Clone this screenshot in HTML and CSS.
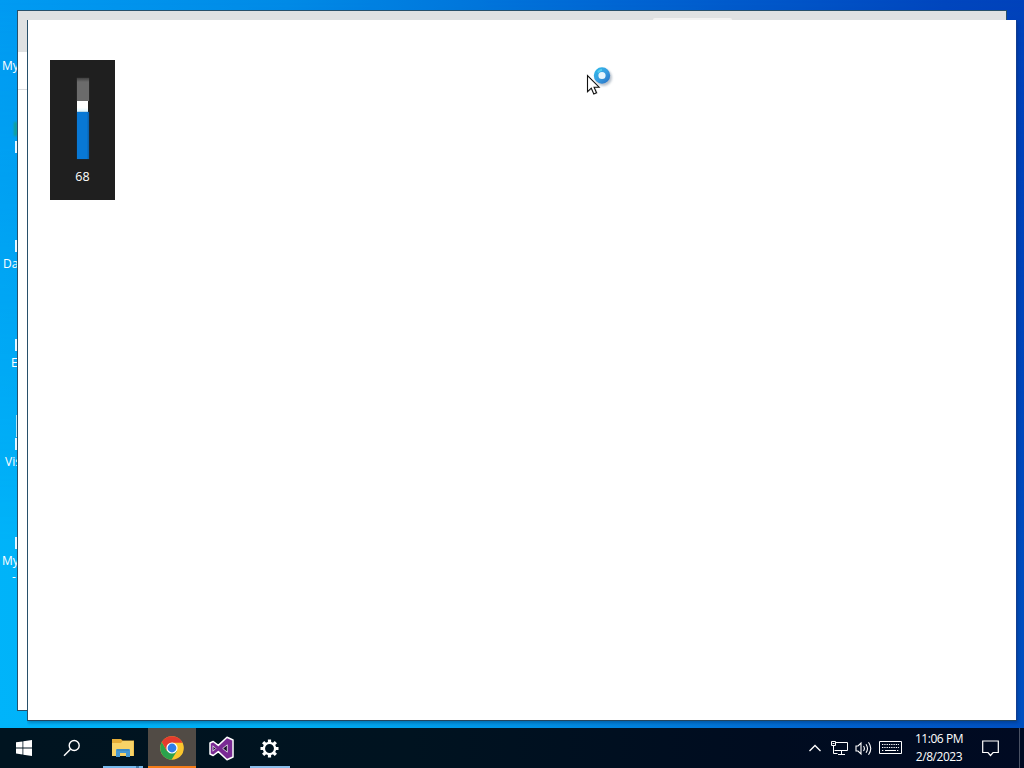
FILE: index.html
```html
<!DOCTYPE html>
<html lang="en">
<head>
<meta charset="utf-8">
<title>Desktop</title>
<link rel="stylesheet" href="styles.css">
</head>
<body>
<main class="desktop">
  <div class="shortcut s1"><span>My</span></div>
  <div class="shortcut s2"><i class="mark"></i><i class="tick"></i></div>
  <div class="shortcut s3"><i class="tick"></i><span class="in-d">Da</span></div>
  <div class="shortcut s4"><i class="tick"></i><span class="in-e">E</span></div>
  <div class="shortcut s5"><i class="page"></i><i class="tick"></i><span class="in-v">Vis</span></div>
  <div class="shortcut s6"><i class="tick"></i><span>My</span><span class="dash">-</span></div>

  <section class="window back"><div class="titlebar"><i class="tab-edge"></i></div><div class="toolbar"></div></section>
  <section class="window front"></section>

  <aside class="volume">
    <div class="track"><div class="rest"></div><div class="thumb"></div><div class="level"></div></div>
    <span class="value">68</span>
  </aside>

  <svg class="pointer" width="32" height="34" viewBox="0 0 32 34">
    <defs><linearGradient id="ring" x1="0" y1="0" x2="1" y2="1"><stop offset="0" stop-color="#2fb4e8"/><stop offset=".5" stop-color="#3a9ee0"/><stop offset="1" stop-color="#2a7acb"/></linearGradient>
    <filter id="soft" x="-30%" y="-30%" width="160%" height="160%"><feGaussianBlur stdDeviation="1.3"/></filter></defs>
    <circle cx="18.500" cy="13.500" r="6" fill="none" stroke="#8a9aaa" stroke-opacity=".6" stroke-width="5" filter="url(#soft)"/>
    <circle cx="17" cy="11.500" r="5.900" fill="#e8f5fd" stroke="url(#ring)" stroke-width="4.600"/>
    <path d="M13 8.500a5.600 5.600 0 0 1 4-2.800" fill="none" stroke="#55cdf0" stroke-width="2"/>
    <path d="M3.500 26v2l4-3 2.500 5.500 3-1-2.500-6 5-.3z" fill="#777" opacity=".25"/>
    <path d="M2.500 11.500v16.200l3.800-3.500 2.500 5.700 2.700-1.200-2.400-5.500h5z" fill="#fff" stroke="#111" stroke-width="1.100"/>
  </svg>
</main>

<footer class="taskbar">
  <div class="task start">
    <svg width="16" height="16" viewBox="0 0 16 16" fill="#fff"><path d="M0 2.300 6.500 1.400v6.100H0zM7.300 1.300 16 0v7.500H7.300zM0 8.400h6.500v6.100L0 13.600zM7.300 8.400H16V16l-8.700-1.300z"/></svg>
  </div>
  <div class="task search">
    <svg width="18" height="18" viewBox="0 0 18 18" fill="none" stroke="#fff" stroke-width="1.400"><circle cx="11.200" cy="6.500" r="5"/><path d="m7.500 10.200-6.500 6.500"/></svg>
  </div>
  <div class="task files">
    <svg width="22" height="18" viewBox="0 0 22 18"><path d="M0 0h9l1.500 1.500H22V17H0z" fill="#e5ad38"/><path d="M0 4h9l1.500-2H21.500v15H0z" fill="#f8d367"/><path d="M4 18v-7q0-1 1-1h12q1 0 1 1v7h-4v-4H8v4z" fill="#4698d2"/><path d="M5 11h12" stroke="#327fb8"/></svg>
    <i class="seam"></i>
  </div>
  <div class="task chrome">
    <svg width="24" height="24" viewBox="0 0 24 24"><circle cx="12" cy="12" r="11.800" fill="#fbc62e"/><path d="M1.800 6.100A11.800 11.800 0 0 0 11.500 23.800L17 15 7 15z" fill="#2ba24c"/><path d="M1.800 6.100A11.800 11.800 0 0 1 22.600 6.800H12L7 15z" fill="#e33b2e"/><circle cx="12" cy="12" r="5.600" fill="#fff"/><circle cx="12" cy="12" r="4.400" fill="#2f7de9"/></svg>
  </div>
  <div class="task studio">
    <svg width="25" height="25" viewBox="0 0 25 25"><path d="M18 1.500 23.700 4v17L18 23.500 9.300 15.600 4.200 19.500 1.200 18V7l3-1.500 5.100 3.900zM18.300 8.800l-4.600 3.700 4.600 3.700zM4 9.800v5.400l2.700-2.700z" fill="#7a2a94" fill-rule="evenodd"/><path d="M18 1.200 24 4v17l-6 2.800-8.700-8.200-5.100 3.900-3.200-1.500V7l3.200-1.500 5.100 3.900z" fill="none" stroke="#fff" stroke-width="1.500" stroke-linejoin="round"/><path d="M18.300 8.800l-4.600 3.700 4.600 3.700zM4 9.800v5.400l2.700-2.700z" fill="#170f28" stroke="#e9dff0" stroke-width=".9"/></svg>
  </div>
  <div class="task settings">
    <svg width="19" height="19" viewBox="-9.500 -9.500 19 19"><g stroke="#fff" stroke-width="3.200"><path d="M0-9V-5M0 9V5M-9 0h4M9 0H5"/><path d="M0-9V-5M0 9V5M-9 0h4M9 0H5" transform="rotate(45)"/></g><circle r="5.600" fill="none" stroke="#fff" stroke-width="2.300"/></svg>
  </div>

  <div class="tray">
    <svg width="14" height="10" viewBox="0 0 14 10" fill="none" stroke="#fff" stroke-width="1.300"><path d="m1.500 8 5.500-5.500L12.500 8"/></svg>
    <svg class="network" width="17" height="15" viewBox="0 0 17 15" fill="none" stroke="#fff"><path d="M5 1.500h11.500v8H3.500M7 13.500h7M10.500 9.500v4M.5.500h4v4h-4zM2.500 4.500v8h4M1.500 2.500h2"/></svg>
    <svg class="speaker" width="18" height="15" viewBox="0 0 18 15" fill="none" stroke="#fff" stroke-width="1.100"><path d="M1 5h2l3-3v11l-3-3H1zM8.500 5q1.800 2.500 0 5M11 3.200q3 4.300 0 8.600M13.500 1.200q4.500 6.300 0 12.600"/></svg>
    <svg class="keyboard" width="23" height="14" viewBox="0 0 23 14" fill="none" stroke="#fff"><path d="M.5.500h22v12H.5z"/><path d="M3 3.500h17M3 6.500h17M3 9.500h2m13 0h2" stroke-dasharray="1.300 1"/><path d="M6 9.500h11"/></svg>
    <div class="clock"><span>11:06 PM</span><span>2/8/2023</span></div>
    <svg class="notice" width="17" height="17" viewBox="0 0 17 17" fill="none" stroke="#fff" stroke-width="1.200"><path d="M.7 1h15.600v11.500h-5.200L8.500 15.500 6 12.500H.7z"/></svg>
    <i class="peek"></i>
  </div>
</footer>
</body>
</html>
```
FILE: styles.css
```css
* { box-sizing: border-box; }
body {
  margin: 0;
  width: 1024px;
  height: 768px;
  overflow: hidden;
  display: flex;
  flex-direction: column;
  font: 12px "Open Sans", "Noto Sans", sans-serif;
  color: #fff;
}
.desktop {
  position: relative;
  flex: 1;
  background: linear-gradient(100deg, #009bf2 0%, #008ae6 25%, #0064d2 55%, #0046be 82%, #003cb6 100%);
}
.desktop::before {
  content: "";
  position: absolute;
  inset: 0;
  background: linear-gradient(78deg, #00b4fa 0%, #00aef2 24%, #0090e4 45%, #0060cc 72%, #0040b4 100%);
  -webkit-mask-image: linear-gradient(transparent, #000 75%);
  mask-image: linear-gradient(transparent, #000 75%);
}

.shortcut { position: absolute; left: 0; width: 40px; height: 60px; line-height: 16px; white-space: nowrap; }
.shortcut span { position: absolute; left: 2px; top: 18px; }
.shortcut .in-d { left: 3px; }
.shortcut .in-e { left: 11px; }
.shortcut .in-v { left: 5px; }
.shortcut .dash { left: 12px; top: 34px; }
.tick { position: absolute; left: 15px; top: 2px; width: 2px; height: 12px; background: #e8f7ff; }
.page { position: absolute; left: 16px; top: -21px; width: 1px; height: 22px; background: #b5e6f5; }
.mark { position: absolute; left: 14px; top: -17px; width: 3px; height: 14px; background: #159f8c; filter: blur(1px); }
.s1 { top: 40px; }
.s2 { top: 139px; }
.s3 { top: 238px; }
.s4 { top: 337px; }
.s5 { top: 436px; }
.s6 { top: 535px; }

.window { position: absolute; background: #fff; border: 1px solid #28506a; }
.back { left: 17px; top: 10px; width: 990px; height: 701px; }
.titlebar { height: 41px; padding: 7px 0 0 635px; background: #dfe1e2; }
.tab-edge { display: block; width: 79px; height: 2px; background: #f2f2f2; border-radius: 3px 3px 0 0; }
.toolbar { height: 38px; border-bottom: 1px solid #dadcdf; }
.front { left: 27px; top: 20px; width: 990px; height: 701px; border-top: 0; border-right-color: #123d91; border-bottom-color: #23455f; box-shadow: 1px 2px 3px #00245055; clip-path: inset(0 -4px -5px 0); }

.volume {
  position: absolute;
  left: 50px;
  top: 60px;
  width: 65px;
  height: 140px;
  padding-top: 18px;
  background: #1f1f1f;
  display: flex;
  flex-direction: column;
  align-items: center;
}
.track { width: 12px; height: 81px; }
.rest { height: 23px; background: linear-gradient(#414141, #6b6b6b 4px); box-shadow: 0 0 1px #505050; }
.thumb { height: 11px; width: 11px; background: linear-gradient(#fff 60%, #d8f6ff); }
.level { height: 47px; background: linear-gradient(90deg, #0878d5 80%, #0b5fa8); box-shadow: 0 0 1px #124876; }
.value { margin-top: 9px; line-height: 17px; font-size: 12.5px; }
.pointer { position: absolute; left: 585px; top: 64px; }

.taskbar {
  height: 40px;
  display: flex;
  background: linear-gradient(90deg, #001420, #001320 40%, #000c20 75%, #000a22);
}
.task { position: relative; width: 48px; height: 40px; display: flex; align-items: center; justify-content: center; }
.files { width: 52px; padding-left: 2px; }
.files::after { content: ""; position: absolute; left: 7px; bottom: 0; width: 40px; height: 2px; background: #76b9ed; }
.seam { position: absolute; z-index: 1; right: 9px; bottom: 0; width: 3px; height: 2px; background: #437ba8; }
.chrome { background: #514b45; border-bottom: 2px solid #f57c18; }
.chrome svg { position: relative; top: 1px; }
.studio { width: 50px; }
.settings { padding-right: 1px; }
.settings::after { content: ""; position: absolute; left: 4px; bottom: 0; width: 40px; height: 2px; background: #8abdea; }
.tray { margin-left: auto; height: 40px; display: flex; align-items: center; }
.network { margin-left: 9px; }
.speaker { margin-left: 7px; }
.keyboard { margin-left: 6px; }
.clock { width: 62px; margin-left: 6px; height: 36px; display: flex; flex-direction: column; align-items: center; line-height: 18px; font-size: 12px; letter-spacing: -.45px; white-space: nowrap; }
.notice { margin-left: 12px; }
.peek { width: 1px; height: 40px; margin: 0 4px 0 20px; background: #4a5264; }
```
